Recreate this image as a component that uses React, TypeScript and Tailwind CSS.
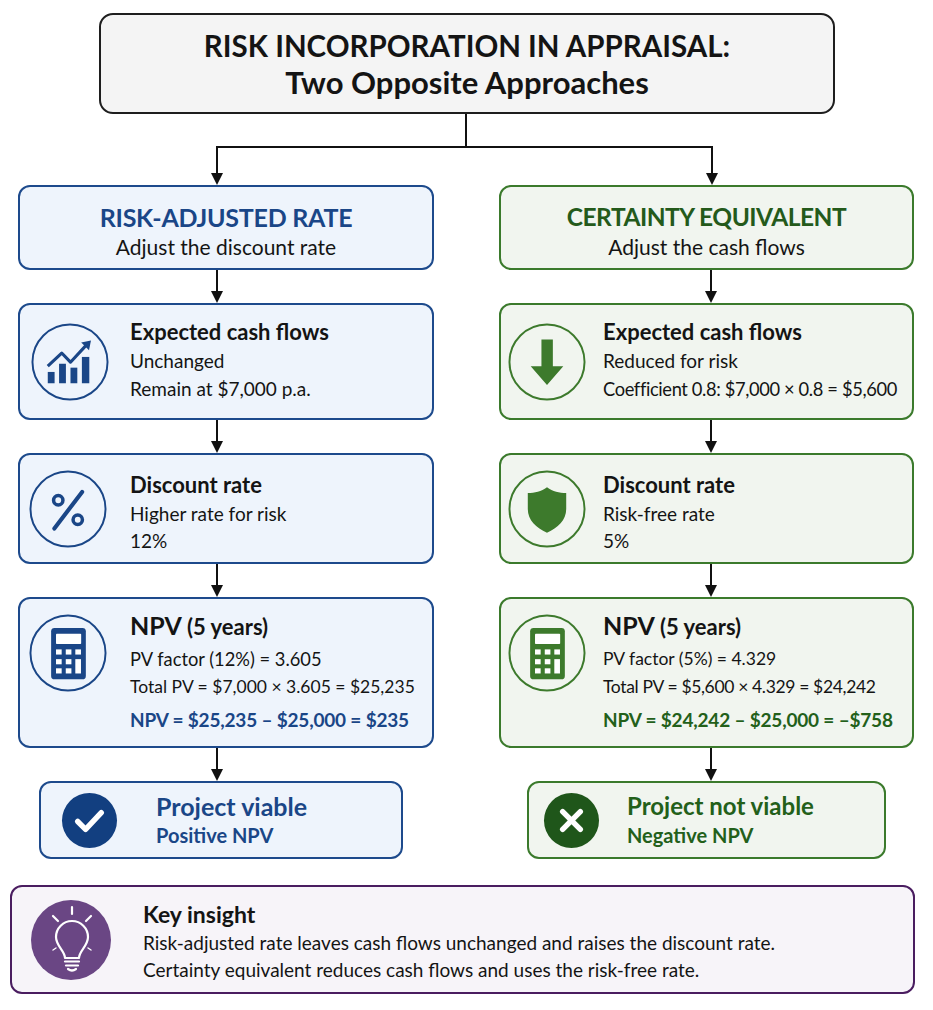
import type { ReactNode } from "react";

const BLUE = "#1a4687";
const GREEN_ICON = "#3d7a2c";

function Arrow({ offset }: { offset: string }) {
  return (
    <div className={`h-[33px] ${offset}`}>
      <svg width="16" height="33" viewBox="0 0 16 33">
        <line x1="8" y1="0" x2="8" y2="22" stroke="#111" strokeWidth="2" />
        <polygon points="2,21 14,21 8,33" fill="#111" />
      </svg>
    </div>
  );
}

function Ring({ color }: { color: string }) {
  return <circle cx="40" cy="40" r="38.5" fill="none" stroke={color} strokeWidth="2" />;
}

function ChartIcon({ color }: { color: string }) {
  return (
    <svg viewBox="0 0 80 80" className="w-full h-full">
      <Ring color={color} />
      <rect x="17.2" y="50.2" width="7" height="11.6" fill={color} />
      <rect x="28.8" y="41.8" width="7" height="20" fill={color} />
      <rect x="40.5" y="45.8" width="7" height="16" fill={color} />
      <rect x="52.2" y="34.8" width="7.6" height="27" fill={color} />
      <polyline points="17.2,44.2 31.5,30.8 40.5,40.2 56,23.5" fill="none" stroke={color} strokeWidth="3.2" strokeLinejoin="round" />
      <polygon points="51.5,20 61.5,18 59.5,28" fill={color} />
    </svg>
  );
}

function PercentIcon({ color }: { color: string }) {
  return (
    <svg viewBox="0 0 80 80" className="w-full h-full">
      <Ring color={color} />
      <circle cx="30" cy="31" r="4.8" fill="none" stroke={color} strokeWidth="3.6" />
      <circle cx="50" cy="51" r="4.8" fill="none" stroke={color} strokeWidth="3.6" />
      <line x1="54.5" y1="22.5" x2="26" y2="60" stroke={color} strokeWidth="4.2" strokeLinecap="round" />
    </svg>
  );
}

function CalcIcon({ color }: { color: string }) {
  const keys = [
    [27.7, 36.3], [37.7, 36.3], [47.5, 36.3],
    [27.7, 46.3], [37.7, 46.3],
    [27.7, 55.7], [37.7, 55.7],
  ];
  return (
    <svg viewBox="0 0 80 80" className="w-full h-full">
      <Ring color={color} />
      <rect x="22.7" y="14.3" width="35.6" height="52.7" rx="3.5" fill={color} />
      <rect x="27.7" y="20.3" width="25.8" height="10.4" rx="0.8" fill="#fff" />
      {keys.map(([x, y], i) => (
        <rect key={i} x={x} y={y} width="5.8" height="5.3" fill="#fff" />
      ))}
      <rect x="47.5" y="46.3" width="5.8" height="14.7" fill="#fff" />
    </svg>
  );
}

function DownIcon({ color }: { color: string }) {
  return (
    <svg viewBox="0 0 80 80" className="w-full h-full">
      <Ring color={color} />
      <polygon points="34.3,17 46,17 46,44.3 56.7,44.3 40,63.7 23.3,44.3 34.3,44.3" fill={color} />
    </svg>
  );
}

function ShieldIcon({ color }: { color: string }) {
  return (
    <svg viewBox="0 0 80 80" className="w-full h-full">
      <Ring color={color} />
      <path
        d="M40 17.7 C46 22 52.5 23.6 59.7 23.6 L59.7 40 C59.7 51.5 51 59.5 40 64.3 C29 59.5 20.3 51.5 20.3 40 L20.3 23.6 C27.5 23.6 34 22 40 17.7 Z"
        fill={color}
      />
    </svg>
  );
}

function Circle({ extra = "", children }: { extra?: string; children: ReactNode }) {
  return <div className={`w-[78px] h-[78px] shrink-0 ${extra}`}>{children}</div>;
}

function StepBox({
  tone,
  height,
  icon,
  top,
  iconPad,
  gap,
  align,
  children,
}: {
  tone: "blue" | "green";
  height: string;
  icon: ReactNode;
  top: string;
  iconPad: string;
  gap: string;
  align: string;
  children: ReactNode;
}) {
  const box =
    tone === "blue"
      ? "border-[#1d4a8c] bg-[#eef4fc]"
      : "border-[#3b7a2c] bg-[#f1f5ef]";
  return (
    <div className={`w-full ${height} border-2 ${box} rounded-[12px] flex ${align} ${iconPad} ${gap}`}>
      {icon}
      <div className={`self-start ${top} text-[#141414] whitespace-nowrap`}>{children}</div>
    </div>
  );
}

function Header({
  tone,
  title,
  sub,
  titleSize,
}: {
  tone: "blue" | "green";
  title: string;
  sub: string;
  titleSize: string;
}) {
  const box =
    tone === "blue"
      ? "border-[#1d4a8c] bg-[#eef4fc] text-[#1a4687]"
      : "border-[#3b7a2c] bg-[#f1f5ef] text-[#245a1b]";
  return (
    <div className={`w-full h-[85px] border-2 ${box} rounded-[12px] flex flex-col items-center justify-center pt-[6px]`}>
      <div className={`${titleSize} leading-[32px] font-bold`}>{title}</div>
      <div className="text-[21px] leading-[28px] text-[#141414]">{sub}</div>
    </div>
  );
}

export default function App() {
  return (
    <div
      className="w-[933px] h-[1010px] bg-white overflow-hidden text-[#141414]"
      style={{ fontFamily: "Lato, 'Noto Sans', sans-serif" }}
    >
      <div className="pt-[13px]">
        <div className="ml-[99px] w-[736px] h-[101px] border-2 border-[#1e1e1e] rounded-[14px] bg-[#f4f4f4] flex flex-col items-center justify-center">
          <div className="text-[29.5px] leading-[36px] font-bold">RISK INCORPORATION IN APPRAISAL:</div>
          <div className="text-[31px] leading-[36px] font-bold">Two Opposite Approaches</div>
        </div>
      </div>

      <svg width="933" height="71" viewBox="0 0 933 71" className="block">
        <line x1="466" y1="0" x2="466" y2="33" stroke="#111" strokeWidth="2" />
        <line x1="216" y1="33" x2="713" y2="33" stroke="#111" strokeWidth="2" />
        <line x1="217" y1="33" x2="217" y2="60" stroke="#111" strokeWidth="2" />
        <line x1="712" y1="33" x2="712" y2="60" stroke="#111" strokeWidth="2" />
        <polygon points="211,59 223,59 217,71" fill="#111" />
        <polygon points="706,59 718,59 712,71" fill="#111" />
      </svg>

      <div className="flex pl-[18px] gap-[65px]">
        {/* left column */}
        <div className="w-[416px] flex flex-col">
          <Header
            tone="blue"
            title="RISK-ADJUSTED RATE"
            sub="Adjust the discount rate"
            titleSize="text-[25px] tracking-[-0.01em]"
          />
          <Arrow offset="ml-[191px]" />
          <StepBox
            tone="blue"
            height="h-[117px]"
            align="items-center"
            iconPad="pl-[11px]"
            gap="gap-[21px]"
            top="pt-[12px]"
            icon={<Circle><ChartIcon color={BLUE} /></Circle>}
          >
            <div className="text-[22px] leading-[30px] font-bold">Expected cash flows</div>
            <div className="text-[19px] leading-[28px]">Unchanged</div>
            <div className="text-[19px] leading-[28px]">Remain at $7,000 p.a.</div>
          </StepBox>
          <Arrow offset="ml-[191px]" />
          <StepBox
            tone="blue"
            height="h-[111px]"
            align="items-center"
            iconPad="pl-[9px]"
            gap="gap-[23px]"
            top="pt-[15px]"
            icon={<Circle><PercentIcon color={BLUE} /></Circle>}
          >
            <div className="text-[22px] leading-[30px] font-bold">Discount rate</div>
            <div className="text-[19px] leading-[28px]">Higher rate for risk</div>
            <div className="text-[19px] leading-[26px]">12%</div>
          </StepBox>
          <Arrow offset="ml-[191px]" />
          <StepBox
            tone="blue"
            height="h-[151px]"
            align="items-start"
            iconPad="pl-[9px]"
            gap="gap-[23px]"
            top="pt-[12px]"
            icon={<Circle extra="mt-[15px]"><CalcIcon color={BLUE} /></Circle>}
          >
            <div className="text-[25px] leading-[28px] font-bold">
              NPV <span className="text-[22px]">(5 years)</span>
            </div>
            <div className="text-[18.3px] leading-[28px] mt-[4px]">PV factor (12%) = 3.605</div>
            <div className="text-[17.5px] leading-[27px]">Total PV = $7,000 × 3.605 = $25,235</div>
            <div className="text-[19px] leading-[30px] font-bold text-[#1a4687] mt-[5px] tracking-[-0.01em]">
              NPV = $25,235 – $25,000 = $235
            </div>
          </StepBox>
          <Arrow offset="ml-[191px]" />
          <div className="ml-[21px] w-[364px] h-[78px] border-2 border-[#1d4a8c] bg-[#eef4fc] rounded-[12px] flex items-center pl-[20px] gap-[38px]">
            <svg width="57" height="57" viewBox="0 0 58 58" className="shrink-0">
              <circle cx="29" cy="29" r="28" fill="#123f80" />
              <polyline points="17,30 25,38 41,21" fill="none" stroke="#fff" strokeWidth="5.5" strokeLinecap="round" strokeLinejoin="round" />
            </svg>
            <div className="text-[#1a4687] font-bold">
              <div className="text-[25px] leading-[30px]">Project viable</div>
              <div className="text-[20px] leading-[28px]">Positive NPV</div>
            </div>
          </div>
        </div>

        {/* right column */}
        <div className="w-[415px] flex flex-col">
          <Header
            tone="green"
            title="CERTAINTY EQUIVALENT"
            sub="Adjust the cash flows"
            titleSize="text-[24.5px] tracking-[-0.02em]"
          />
          <Arrow offset="ml-[204px]" />
          <StepBox
            tone="green"
            height="h-[117px]"
            align="items-center"
            iconPad="pl-[7px]"
            gap="gap-[17px]"
            top="pt-[12px]"
            icon={<Circle><DownIcon color={GREEN_ICON} /></Circle>}
          >
            <div className="text-[22px] leading-[30px] font-bold">Expected cash flows</div>
            <div className="text-[19px] leading-[28px]">Reduced for risk</div>
            <div className="text-[18.3px] leading-[28px] tracking-[-0.02em]">Coefficient 0.8: $7,000 × 0.8 = $5,600</div>
          </StepBox>
          <Arrow offset="ml-[204px]" />
          <StepBox
            tone="green"
            height="h-[111px]"
            align="items-center"
            iconPad="pl-[7px]"
            gap="gap-[17px]"
            top="pt-[15px]"
            icon={<Circle><ShieldIcon color={GREEN_ICON} /></Circle>}
          >
            <div className="text-[22px] leading-[30px] font-bold">Discount rate</div>
            <div className="text-[19px] leading-[28px]">Risk-free rate</div>
            <div className="text-[19px] leading-[26px]">5%</div>
          </StepBox>
          <Arrow offset="ml-[204px]" />
          <StepBox
            tone="green"
            height="h-[151px]"
            align="items-start"
            iconPad="pl-[7px]"
            gap="gap-[17px]"
            top="pt-[12px]"
            icon={<Circle extra="mt-[15px]"><CalcIcon color={GREEN_ICON} /></Circle>}
          >
            <div className="text-[25px] leading-[28px] font-bold">
              NPV <span className="text-[22px]">(5 years)</span>
            </div>
            <div className="text-[17.5px] leading-[28px] mt-[4px]">PV factor (5%) = 4.329</div>
            <div className="text-[17.5px] leading-[27px] tracking-[-0.02em]">Total PV = $5,600 × 4.329 = $24,242</div>
            <div className="text-[19px] leading-[30px] font-bold text-[#23601a] mt-[5px] tracking-[-0.01em]">
              NPV = $24,242 – $25,000 = –$758
            </div>
          </StepBox>
          <Arrow offset="ml-[204px]" />
          <div className="ml-[28px] w-[359px] h-[78px] border-2 border-[#3b7a2c] bg-[#f1f5ef] rounded-[12px] flex items-center pl-[14px] gap-[27px]">
            <svg width="57" height="57" viewBox="0 0 58 58" className="shrink-0">
              <circle cx="29" cy="29" r="28" fill="#1f561a" />
              <line x1="20" y1="20" x2="38" y2="38" stroke="#fff" strokeWidth="5.5" strokeLinecap="round" />
              <line x1="38" y1="20" x2="20" y2="38" stroke="#fff" strokeWidth="5.5" strokeLinecap="round" />
            </svg>
            <div className="text-[#23601a] font-bold">
              <div className="text-[24px] leading-[30px]">Project not viable</div>
              <div className="text-[20px] leading-[28px]">Negative NPV</div>
            </div>
          </div>
        </div>
      </div>

      {/* key insight */}
      <div className="mt-[26px] ml-[10px] w-[905px] h-[109px] border-2 border-[#4a1d60] bg-[#f7f4f9] rounded-[12px] flex items-center pl-[19px] gap-[32px]">
        <svg width="80" height="80" viewBox="0 0 80 80" className="shrink-0">
          <circle cx="40" cy="40" r="40" fill="#6a4684" />
          <g fill="none" stroke="#fff" strokeWidth="2.2" strokeLinecap="round" strokeLinejoin="round">
            <path d="M34 58 C34 51 25 46 25 37 A16 16 0 0 1 57 37 C57 46 48 51 48 58 Z" />
            <line x1="34" y1="61.5" x2="48" y2="61.5" />
            <line x1="35" y1="65.5" x2="47" y2="65.5" />
            <path d="M37 69 Q41 72 45 69" />
            <line x1="41" y1="7" x2="41" y2="14" />
            <line x1="22" y1="16" x2="27" y2="21" />
            <line x1="60" y1="16" x2="55" y2="21" />
            <line x1="22" y1="50" x2="25" y2="48" strokeWidth="1.4" />
            <line x1="60" y1="50" x2="57" y2="48" strokeWidth="1.4" />
          </g>
        </svg>
        <div className="self-start pt-[12px]">
          <div className="text-[23px] leading-[30px] font-bold">Key insight</div>
          <div className="text-[19px] leading-[27px]">
            Risk-adjusted rate leaves cash flows unchanged and raises the discount rate.
          </div>
          <div className="text-[19px] leading-[27px]">
            Certainty equivalent reduces cash flows and uses the risk-free rate.
          </div>
        </div>
      </div>
    </div>
  );
}
